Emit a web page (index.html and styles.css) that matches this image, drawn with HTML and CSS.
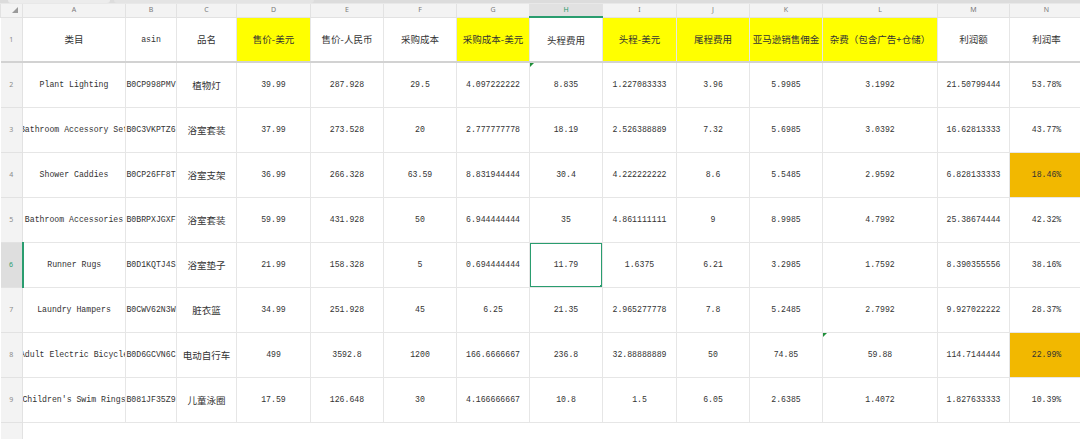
FILE: index.html
```html
<!DOCTYPE html>
<html lang="zh">
<head>
<meta charset="utf-8">
<title>Sheet</title>
<link rel="stylesheet" href="styles.css">
</head>
<body>
<div class="topbar"><div class="tab"></div><div class="tab2"></div></div>
<table class="sheet">
  <colgroup>
    <col class="c-rh"><col class="c-a"><col class="c-b"><col class="c-c"><col class="c-d"><col class="c-e"><col class="c-f"><col class="c-g"><col class="c-h"><col class="c-i"><col class="c-j"><col class="c-k"><col class="c-l"><col class="c-m"><col class="c-n">
  </colgroup>
  <thead>
    <tr class="colhdr">
      <th class="corner"><svg width="6" height="6" viewBox="0 0 6 6"><path d="M6 0 L6 6 L0 6 Z" fill="#9a9a9a"/></svg></th>
      <th>A</th><th>B</th><th>C</th><th>D</th><th>E</th><th>F</th><th>G</th><th class="sel">H</th><th>I</th><th>J</th><th>K</th><th>L</th><th>M</th><th>N</th>
    </tr>
  </thead>
  <tbody>
    <tr class="r-head">
      <td class="rh">1</td>
      <td class="zh"><div class="v">类目</div></td>
      <td><div class="v">asin</div></td>
      <td class="zh"><div class="v">品名</div></td>
      <td class="zh yel"><div class="v">售价-美元</div></td>
      <td class="zh"><div class="v">售价-人民币</div></td>
      <td class="zh"><div class="v">采购成本</div></td>
      <td class="zh yel"><div class="v">采购成本-美元</div></td>
      <td class="zh"><div class="v">头程费用</div></td>
      <td class="zh yel"><div class="v">头程-美元</div></td>
      <td class="zh yel"><div class="v">尾程费用</div></td>
      <td class="zh yel"><div class="v">亚马逊销售佣金</div></td>
      <td class="zh yel"><div class="v">杂费（包含广告+仓储）</div></td>
      <td class="zh"><div class="v">利润额</div></td>
      <td class="zh"><div class="v">利润率</div></td>
    </tr>
    <tr>
      <td class="rh">2</td>
      <td><div class="v">Plant Lighting</div></td><td><div class="v">B0CP998PMV</div></td><td class="zh"><div class="v">植物灯</div></td>
      <td><div class="v">39.99</div></td><td><div class="v">287.928</div></td><td><div class="v">29.5</div></td><td><div class="v">4.097222222</div></td>
      <td class="mark"><div class="v">8.835</div></td><td><div class="v">1.227083333</div></td><td><div class="v">3.96</div></td><td><div class="v">5.9985</div></td>
      <td><div class="v">3.1992</div></td><td><div class="v">21.50799444</div></td><td><div class="v">53.78%</div></td>
    </tr>
    <tr>
      <td class="rh">3</td>
      <td><div class="v">Bathroom Accessory Set</div></td><td><div class="v">B0C3VKPTZ6</div></td><td class="zh"><div class="v">浴室套装</div></td>
      <td><div class="v">37.99</div></td><td><div class="v">273.528</div></td><td><div class="v">20</div></td><td><div class="v">2.777777778</div></td>
      <td><div class="v">18.19</div></td><td><div class="v">2.526388889</div></td><td><div class="v">7.32</div></td><td><div class="v">5.6985</div></td>
      <td><div class="v">3.0392</div></td><td><div class="v">16.62813333</div></td><td><div class="v">43.77%</div></td>
    </tr>
    <tr>
      <td class="rh">4</td>
      <td><div class="v">Shower Caddies</div></td><td><div class="v">B0CP26FF8T</div></td><td class="zh"><div class="v">浴室支架</div></td>
      <td><div class="v">36.99</div></td><td><div class="v">266.328</div></td><td><div class="v">63.59</div></td><td><div class="v">8.831944444</div></td>
      <td><div class="v">30.4</div></td><td><div class="v">4.222222222</div></td><td><div class="v">8.6</div></td><td><div class="v">5.5485</div></td>
      <td><div class="v">2.9592</div></td><td><div class="v">6.828133333</div></td><td class="org"><div class="v">18.46%</div></td>
    </tr>
    <tr>
      <td class="rh">5</td>
      <td><div class="v">Bathroom Accessories</div></td><td><div class="v">B0BRPXJGXF</div></td><td class="zh"><div class="v">浴室套装</div></td>
      <td><div class="v">59.99</div></td><td><div class="v">431.928</div></td><td><div class="v">50</div></td><td><div class="v">6.944444444</div></td>
      <td><div class="v">35</div></td><td><div class="v">4.861111111</div></td><td><div class="v">9</div></td><td><div class="v">8.9985</div></td>
      <td><div class="v">4.7992</div></td><td><div class="v">25.38674444</div></td><td><div class="v">42.32%</div></td>
    </tr>
    <tr>
      <td class="rh sel">6</td>
      <td><div class="v">Runner Rugs</div></td><td><div class="v">B0D1KQTJ4S</div></td><td class="zh"><div class="v">浴室垫子</div></td>
      <td><div class="v">21.99</div></td><td><div class="v">158.328</div></td><td><div class="v">5</div></td><td><div class="v">0.694444444</div></td>
      <td class="active"><div class="v">11.79</div><span class="handle"></span></td><td><div class="v">1.6375</div></td><td><div class="v">6.21</div></td><td><div class="v">3.2985</div></td>
      <td><div class="v">1.7592</div></td><td><div class="v">8.390355556</div></td><td><div class="v">38.16%</div></td>
    </tr>
    <tr>
      <td class="rh">7</td>
      <td><div class="v">Laundry Hampers</div></td><td><div class="v">B0CWV62N3W</div></td><td class="zh"><div class="v">脏衣篮</div></td>
      <td><div class="v">34.99</div></td><td><div class="v">251.928</div></td><td><div class="v">45</div></td><td><div class="v">6.25</div></td>
      <td><div class="v">21.35</div></td><td><div class="v">2.965277778</div></td><td><div class="v">7.8</div></td><td><div class="v">5.2485</div></td>
      <td><div class="v">2.7992</div></td><td><div class="v">9.927022222</div></td><td><div class="v">28.37%</div></td>
    </tr>
    <tr>
      <td class="rh">8</td>
      <td><div class="v">Adult Electric Bicycle</div></td><td><div class="v">B0D6GCVN6C</div></td><td class="zh"><div class="v">电动自行车</div></td>
      <td><div class="v">499</div></td><td><div class="v">3592.8</div></td><td><div class="v">1200</div></td><td><div class="v">166.6666667</div></td>
      <td><div class="v">236.8</div></td><td><div class="v">32.88888889</div></td><td><div class="v">50</div></td><td><div class="v">74.85</div></td>
      <td class="mark"><div class="v">59.88</div></td><td><div class="v">114.7144444</div></td><td class="org"><div class="v">22.99%</div></td>
    </tr>
    <tr>
      <td class="rh">9</td>
      <td><div class="v">Children's Swim Rings</div></td><td><div class="v">B081JF35Z9</div></td><td class="zh"><div class="v">儿童泳圈</div></td>
      <td><div class="v">17.59</div></td><td><div class="v">126.648</div></td><td><div class="v">30</div></td><td><div class="v">4.166666667</div></td>
      <td><div class="v">10.8</div></td><td><div class="v">1.5</div></td><td><div class="v">6.05</div></td><td><div class="v">2.6385</div></td>
      <td><div class="v">1.4072</div></td><td><div class="v">1.827633333</div></td><td><div class="v">10.39%</div></td>
    </tr>
    <tr class="r-empty">
      <td class="rh"></td>
      <td></td><td></td><td></td><td></td><td></td><td></td><td></td><td></td><td></td><td></td><td></td><td></td><td class="keep"></td><td class="keep"></td>
    </tr>
  </tbody>
</table>
</body>
</html>
```

FILE: styles.css
```css
html, body {
  margin: 0;
  padding: 0;
  background: #ffffff;
  overflow: hidden;
  width: 1080px;
  height: 439px;
}

.topbar {
  height: 4px;
  background: #dcdcdc;
  display: flex;
  gap: 4px;
  padding-left: 8px;
  box-sizing: border-box;
  border-bottom: 1px solid #e8e8e8;
}
.topbar .tab {
  width: 102px;
  height: 3px;
  background: #ececec;
  border-radius: 0 0 3px 3px;
}
.topbar .tab2 {
  width: 200px;
  height: 3px;
  background: #e4e4e4;
  border-radius: 0 0 3px 3px;
}

.sheet {
  border-collapse: collapse;
  table-layout: fixed;
  width: 1082px;
  font-family: "Liberation Mono", "DejaVu Sans Mono", monospace;
  font-size: 8.2px;
  color: #333333;
}

.c-rh { width: 22px; }
.c-a { width: 103px; }
.c-b { width: 51px; }
.c-c { width: 60px; }
.c-d { width: 74px; }
.c-e { width: 73px; }
.c-f { width: 73px; }
.c-g { width: 73px; }
.c-h { width: 73px; }
.c-i { width: 74px; }
.c-j { width: 73px; }
.c-k { width: 73px; }
.c-l { width: 115px; }
.c-m { width: 72px; }
.c-n { width: 74px; }

.sheet th, .sheet td {
  padding: 0;
  border: 1px solid #e6e6e6;
  text-align: center;
  vertical-align: middle;
  overflow: hidden;
  white-space: nowrap;
}

.colhdr th {
  height: 12px;
  background: #f3f3f3;
  color: #7a7a7a;
  font-family: "Noto Sans", "DejaVu Sans", sans-serif;
  font-weight: normal;
  font-size: 7px;
  line-height: 12px;
  border-color: #e2e2e2;
  border-top: none;
}
.colhdr th.corner {
  text-align: right;
  padding-right: 4px;
}
.colhdr th.corner svg { display: block; margin-left: auto; }
.colhdr th.sel {
  background: #e1e1e1;
  color: #1f9a68;
  border-bottom: 2px solid #2a9d6f;
}

.sheet td.rh {
  background: #f3f3f3;
  color: #8a8a8a;
  font-family: "Noto Sans", "DejaVu Sans", sans-serif;
  font-size: 7px;
  border-color: #e2e2e2;
  border-left: none;
}
.sheet td.rh.sel {
  background: #dedede;
  color: #2a9d6f;
  border-right: 2px solid #2a9d6f;
}

.sheet tbody tr { height: 45px; }
.sheet tbody tr.r-head td {
  border-bottom: 2px solid #d2d2d2;
}
.sheet tbody tr.r-empty { height: 18px; }
.sheet tbody tr.r-empty td {
  border-bottom: none;
  border-left-color: #ffffff;
  border-right-color: #ffffff;
}
.sheet tbody tr.r-empty td.rh { border-right-color: #e2e2e2; }
.sheet tbody tr.r-empty td.keep { border-left-color: #e6e6e6; }

.v {
  display: block;
  margin: 0 -30px;
  text-align: center;
  white-space: nowrap;
}

.sheet td.zh {
  font-family: "Noto Sans CJK SC", "Noto Sans", sans-serif;
  font-size: 9.5px;
  color: #333333;
}

.sheet td.yel { background: #ffff00; }
.sheet td.org { background: #f2b800; }

.sheet td.mark, .sheet td.active { position: relative; }
.sheet td.mark::before {
  content: "";
  position: absolute;
  left: 0;
  top: 0;
  border-top: 4px solid #1f8f3a;
  border-right: 4px solid transparent;
}

.sheet td.active::after {
  content: "";
  position: absolute;
  left: -1px;
  top: -1px;
  right: -1px;
  bottom: -1px;
  border: 2px solid #2a9d6f;
}
.sheet td.active .handle {
  position: absolute;
  right: -2px;
  bottom: -2px;
  width: 4px;
  height: 4px;
  background: #2a9d6f;
  z-index: 2;
}
```
